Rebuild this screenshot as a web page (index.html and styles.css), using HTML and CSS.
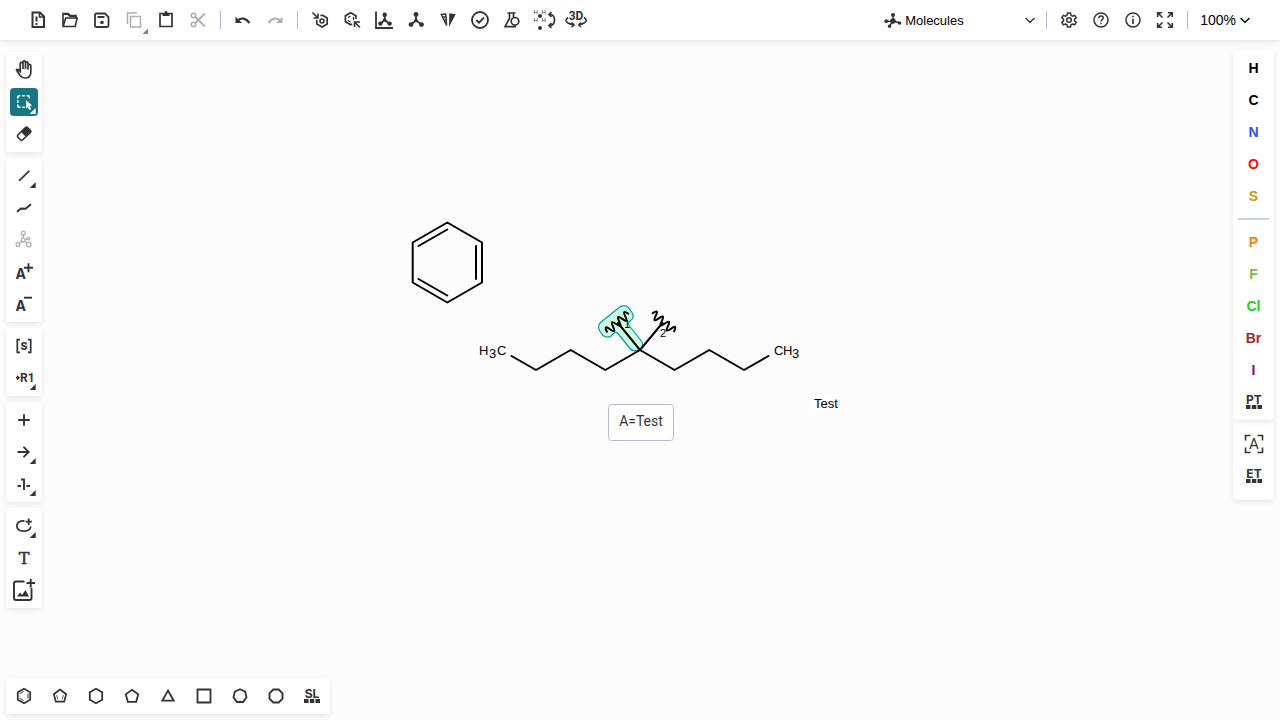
FILE: index.html
```html
<!DOCTYPE html>
<html lang="en">
<head>
<meta charset="utf-8">
<meta name="viewport" content="width=device-width, initial-scale=1">
<title>Molecule editor</title>
<link rel="stylesheet" href="styles.css">
</head>
<body>
<svg class="defs" aria-hidden="true">
  <defs>
    <path id="corner" d="M25.700 20v6h-6z" fill="currentColor" stroke="none"/>
    <path id="dots" d="M6 17h4.500v4H6zM11.800 17h4.500v4h-4.500zM17.500 17H22v4h-4.500z" fill="currentColor" stroke="none"/>
  </defs>
</svg>
<header class="topbar">
  <button class="tool" aria-label="Clear canvas"><svg class="icon" viewBox="0 0 28 28"><path d="M8.500 6.500h7.500l4 4V21H8.500z"/><path d="M15.500 6v5h5" stroke-width="1.500"/><path d="M12.500 10.500v5M12.500 17v2"/></svg></button>
  <button class="tool" aria-label="Open"><svg class="icon" viewBox="0 0 28 28"><path d="M7 20.500v-13h5l2 2h6v2M7.200 20.500l2.500-8.500h11.500l-2 8.500z" stroke-width="1.600"/><path d="M7 8h5l2 2h6" stroke-width="2"/></svg></button>
  <button class="tool" aria-label="Save"><svg class="icon" viewBox="0 0 28 28"><path d="M8.500 7.500H17l3.500 3.500v8.500q0 1.500-1.500 1.500H8.500Q7 21 7 19.500V9q0-1.500 1.500-1.500z" stroke-width="1.800"/><path d="M9.500 11h7"/><circle class="solid" cx="14" cy="16.500" r="1.800"/></svg></button>
  <button class="tool dim" aria-label="Copy"><svg class="icon" viewBox="0 0 28 28"><path d="M7.500 18V7H17M10.500 10.500h10V21h-10z" stroke-width="1.500"/><path class="solid corner-gray" d="M28 22.500V28h-5.500z"/></svg></button>
  <button class="tool" aria-label="Paste"><svg class="icon" viewBox="0 0 28 28"><path d="M8 7.500h12v13H8z" stroke-width="1.700"/><path class="solid" d="M10.500 7h2q0-2 1.500-2t1.500 2h2v3h-7z"/></svg></button>
  <button class="tool dim" aria-label="Cut"><svg class="icon" viewBox="0 0 28 28"><circle cx="9.500" cy="9.500" r="2.200" stroke-width="1.600"/><circle cx="9.500" cy="18.500" r="2.200" stroke-width="1.600"/><path d="M11 10.800l10 9.700M11 17.200L21 7.500"/></svg></button>
  <span class="rule"></span>
  <button class="tool" aria-label="Undo"><svg class="icon" viewBox="0 0 28 28"><path d="M8.500 14.500q6.500-5 12 2.500" stroke-width="2.200"/><path class="solid" d="M6.500 10.500v6.500h6.500z"/></svg></button>
  <button class="tool dim" aria-label="Redo"><svg class="icon" viewBox="0 0 28 28"><path d="M19.500 14.500q-6.500-5-12 2.500" stroke-width="2.200"/><path class="solid" d="M21.500 10.500v6.500H15z"/></svg></button>
  <span class="rule"></span>
  <button class="tool" aria-label="Aromatize"><svg class="icon" viewBox="0 0 28 28"><path d="M16 9l5.200 3v6L16 21l-5.200-3v-4M14.500 9.800L16 9" stroke-width="1.700"/><circle cx="16" cy="15" r="2" stroke-width="1.600"/><path d="M6.500 6.500l5 5M12 7.500V12H7.500" stroke-width="1.600"/></svg></button>
  <button class="tool" aria-label="Dearomatize"><svg class="icon" viewBox="0 0 28 28"><path d="M18 13V9.700l-5.300-3-5.300 3v6l5.300 3 1.500-.8" stroke-width="1.700"/><path d="M10 11.500l2.500-1.500M10 14.500l2.500 1.500M15.500 10.800V14" stroke-width="1.300"/><path d="M22 21.500l-5-5M16.500 21v-5H22" stroke-width="1.700"/></svg></button>
  <button class="tool" aria-label="Layout"><svg class="icon" viewBox="0 0 28 28"><path d="M6 5.500V22h17M14.700 9v5l-4.200 3.500M14.700 14l4.500 3.500" stroke-width="1.800"/><g class="solid"><circle cx="14.700" cy="8.700" r="2.200"/><circle cx="10.400" cy="17.600" r="2.200"/><circle cx="19.600" cy="17.600" r="2.200"/><circle cx="14.700" cy="14" r="1.700"/></g></svg></button>
  <button class="tool" aria-label="Clean up"><svg class="icon" viewBox="0 0 28 28"><path d="M14 8v6.500l-5 4M14 14.500l5.500 4" stroke-width="1.800"/><g class="solid"><circle cx="14" cy="8.500" r="2.400"/><circle cx="9" cy="18.600" r="2.400"/><circle cx="19.500" cy="18.600" r="2.400"/><circle cx="14" cy="14.500" r="1.800"/></g></svg></button>
  <button class="tool" aria-label="Calculate CIP"><svg class="icon" viewBox="0 0 28 28"><path d="M7.300 8.500l4.500-.5.800 11.500z" stroke-width="1.400"/><path d="M8.500 11h4M10 14h2.500" stroke-width="1.300"/><path class="solid" d="M15.300 7.300l6.400 1L15 21z"/></svg></button>
  <button class="tool" aria-label="Check structure"><svg class="icon" viewBox="0 0 28 28"><circle cx="14" cy="14" r="8" stroke-width="1.800"/><path d="M10.300 14l2.700 2.600 5-5"/></svg></button>
  <button class="tool" aria-label="Calculated values"><svg class="icon" viewBox="0 0 28 28"><path d="M9.500 7h8M11.500 7v5.500L7 20.700h11M15.500 7v4" stroke-width="1.700"/><circle cx="17" cy="15.300" r="3.800" stroke-width="1.700"/></svg></button>
  <button class="tool" aria-label="Add or remove explicit hydrogens"><svg class="icon" viewBox="0 0 28 28"><g class="tiny"><text x="3.500" y="8">H</text><text x="11.500" y="8">H</text><text x="3.500" y="16">H</text><text x="11.500" y="16">H</text></g><circle class="solid" cx="10" cy="10" r="2"/><circle class="solid" cx="10" cy="22" r="2"/><path d="M19.500 8.500h1.500q3.500 1 3.500 5.500t-3.500 5.500h-1.500M21.500 6l-2.500 2.500L21.500 11M21.500 17L19 19.500l2.500 2.500" stroke-width="1.700"/></svg></button>
  <button class="tool" aria-label="3D viewer"><svg class="icon" viewBox="0 0 28 28"><text class="t3d" x="14" y="14">3D</text><path d="M6 11.500q-4 3 0 5.500 2.500 1.500 5.500 1.800M22 11.500q4.500 3 0 5.500-2 1.300-5 1.700M9.500 16.500l2.500 2.500-2.500 2.200M19 16.500L16.700 19l2.300 2" stroke-width="1.600"/></svg></button>

  <div class="mode">
    <svg class="mode-logo" viewBox="0 0 18 18" aria-hidden="true"><path d="M9 4v6M2 10.500L9 10l7 2M9 10l-3.500 5" stroke-width="1.400"/><g class="solid"><circle cx="9" cy="4" r="2"/><circle cx="2.200" cy="10.200" r="1.900"/><circle cx="9" cy="10" r="2.700"/><circle cx="15.500" cy="12" r="1.800"/><circle cx="5.500" cy="15.300" r="1.700"/></g></svg>
    <select class="mode-select" aria-label="Editor mode"><option>Molecules</option><option>Macromolecules</option></select>
    <svg class="chevron" viewBox="0 0 12 12" aria-hidden="true"><path d="M1.500 4L6 8.300 10.500 4"/></svg>
  </div>
  <span class="rule"></span>
  <button class="tool" aria-label="Settings"><svg class="icon" viewBox="0 0 28 28"><path d="M12.500 7h3l.5 2.300 1.500.8 2.200-.8 1.500 2.500-1.700 1.500v1.500l1.700 1.500-1.500 2.500-2.200-.8-1.500.8-.5 2.200h-3l-.5-2.200-1.500-.8-2.200.8-1.500-2.500L8.500 14.800v-1.500l-1.700-1.500 1.500-2.500 2.200.8 1.500-.8z" stroke-width="1.500"/><circle cx="14" cy="14" r="2.300" stroke-width="1.500"/></svg></button>
  <button class="tool" aria-label="Help"><svg class="icon" viewBox="0 0 28 28"><circle cx="14" cy="14" r="7" stroke-width="1.500"/><path d="M11.800 12.300q0-2.200 2.200-2.200t2.200 2q0 1-1.200 1.700-1 .7-1 1.700M14 16.700v1.600" stroke-width="1.500"/></svg></button>
  <button class="tool" aria-label="About"><svg class="icon" viewBox="0 0 28 28"><circle cx="14" cy="14" r="7" stroke-width="1.500"/><path d="M14 9.700v1.600M14 12.700v5.300" stroke-width="1.600"/></svg></button>
  <button class="tool" aria-label="Full screen"><svg class="icon" viewBox="0 0 28 28"><path d="M6.700 11V6.700H11M17 6.700h4.300V11M21.300 17v4.300H17M11 21.300H6.700V17M7 7l4.500 4.500M21 7l-4.500 4.500M21 21l-4.500-4.500M7 21l4.500-4.500" stroke-width="1.600"/></svg></button>
  <span class="rule"></span>
  <button class="zoom" aria-haspopup="menu">100%<svg class="chevron" viewBox="0 0 12 12" aria-hidden="true"><path d="M1.500 4L6 8.300 10.500 4"/></svg></button>
</header>

<main class="workspace">
  <aside class="side side-left" aria-label="Drawing tools">
    <div class="group">
      <button class="tool" aria-label="Hand"><svg class="icon" viewBox="0 0 28 28"><path d="M10.200 15.500L8 13.500q-1.200-.7-1.500.5l3.500 5.500q2 2.500 5 2.500 5.500 0 5.800-5.500V9.500q-.2-1.200-1.400-1.200T18 9.500v4V7q-.2-1.200-1.300-1.200T15.500 7v6V6q-.2-1.200-1.300-1.200T13 6v7V7.500q-.2-1.200-1.400-1.200t-1.400 1.200z" stroke-width="1.700"/></svg></button>
      <button class="tool active" aria-label="Rectangle selection" aria-pressed="true"><svg class="icon" viewBox="0 0 28 28"><path d="M7.800 10.500V9q0-1.200 1.200-1.200h1.500M16.500 7.800H18q1.200 0 1.200 1.200v1.500M7.800 16.500V18q0 1.200 1.200 1.200h1.500M12.300 7.800h2.500M7.800 12.300v2.500M12.300 19.200h2.500" stroke-width="1.600"/><path class="solid" d="M16 12.200l6.200 5.300-2.700.5 1.700 3-1.800 1-1.700-3-1.700 1.700z"/><use href="#corner"/></svg></button>
      <button class="tool" aria-label="Erase"><svg class="icon" viewBox="0 0 28 28"><path d="M15.500 7.500q1-.8 2 0l3 3q.8 1 0 2l-8 7.500q-1 .8-2 0l-2.700-3q-.8-1 0-2z" stroke-width="1.600"/><path class="solid" d="M16.500 7l4.500 4.500-5.500 5-4.500-4.500z"/></svg></button>
    </div>
    <div class="group">
      <button class="tool" aria-label="Single bond"><svg class="icon" viewBox="0 0 28 28"><path d="M9 18.800L19.300 8.800" stroke-width="1.700"/><use href="#corner"/></svg></button>
      <button class="tool" aria-label="Chain"><svg class="icon" viewBox="0 0 28 28"><path d="M7 17.800l4-3.300 4.500.2L21 10.300" stroke-width="2"/></svg></button>
      <button class="tool dim" aria-label="Stereochemistry"><svg class="icon" viewBox="0 0 28 28"><g stroke-width="1.300"><circle cx="13.300" cy="7" r="1.900"/><circle cx="13.300" cy="14" r="1.900"/><circle cx="8" cy="18.500" r="1.900"/><circle cx="18.800" cy="18.500" r="2.300"/><circle cx="18.600" cy="12.500" r="1.200"/><path d="M13.300 9v3M11.800 15.200l-2.300 2M15 15.200l2.200 1.800M15.300 13.500l2.200-.6"/></g></svg></button>
      <button class="tool" aria-label="Charge plus"><svg class="icon" viewBox="0 0 28 28"><text class="letter-a" x="5.500" y="21">A</text><path d="M18.500 5.300v9M14 9.800h9" stroke-width="1.900"/></svg></button>
      <button class="tool" aria-label="Charge minus"><svg class="icon" viewBox="0 0 28 28"><text class="letter-a" x="5.500" y="21">A</text><path d="M14 7.700h8" stroke-width="1.900"/></svg></button>
    </div>
    <div class="group">
      <button class="tool" aria-label="S-Group"><svg class="icon" viewBox="0 0 28 28"><path d="M10 7.700H7.300v12.600H10M18 7.700h2.700v12.600H18" stroke-width="1.700"/><text class="letter-s" x="14" y="18">s</text></svg></button>
      <button class="tool" aria-label="R-Group label"><svg class="icon" viewBox="0 0 28 28"><path d="M6 13.700h3M7 11.700l2 2-2 2" stroke-width="1.400"/><text class="letter-r" x="10" y="18">R1</text><use href="#corner"/></svg></button>
    </div>
    <div class="group">
      <button class="tool" aria-label="Reaction plus"><svg class="icon" viewBox="0 0 28 28"><path d="M14 8.200v11.600M8.200 14h11.600" stroke-width="1.900"/></svg></button>
      <button class="tool" aria-label="Reaction arrow"><svg class="icon" viewBox="0 0 28 28"><path d="M7.500 14H19M13.500 8.800l5.200 5.200-5.200 5.200" stroke-width="1.900"/><use href="#corner"/></svg></button>
      <button class="tool" aria-label="Reaction mapping"><svg class="icon" viewBox="0 0 28 28"><path d="M7.500 16H11M16.500 16H20M11 9.500h3V20" stroke-width="1.900"/><use href="#corner"/></svg></button>
    </div>
    <div class="group">
      <button class="tool" aria-label="Ellipse"><svg class="icon" viewBox="0 0 28 28"><path d="M14.500 8.800Q7 8.500 6.800 14q.5 5 7 5.200 6.400-.2 7-4.700" stroke-width="1.800"/><path d="M18.700 6.500v6.400M15.500 9.700h6.400" stroke-width="1.800"/><use href="#corner"/></svg></button>
      <button class="tool" aria-label="Add text"><svg class="icon" viewBox="0 0 28 28"><text class="letter-t" x="14" y="20">T</text></svg></button>
      <button class="tool" aria-label="Add image"><svg class="icon" viewBox="0 0 28 28"><path d="M14.500 5.500H6Q4 5.500 4 7.500V22q0 2 2 2h13.500q2 0 2-2V12M20.700 3v8.500M16.500 7h8.500" stroke-width="1.900"/><path class="solid" d="M7 20.500l3-4 2 2.500 3.500-5L19 20.500z"/></svg></button>
    </div>
  </aside>

  <section class="canvas" aria-label="Canvas">
    <svg class="drawing" viewBox="400 200 480 318">
      <path class="bond" d="M447.300 222.500L482 242.500v40l-34.700 20-34.600-20v-40zM418.500 246l28.800-16.500M476 246v33M447.300 295.500L418.500 279"/>
      <path class="highlight" d="M600.500 322.500L619.500 307.200Q623.500 304 628 307L632 312.500Q635 318 630.500 320.500L628.500 322.500Q628.300 324 629.500 326L641 340.500Q644 344.500 641.500 348L636.500 350.700Q632.500 351.500 630 348.500L617.500 333Q615.500 331.500 613.500 333.500L611 336Q607 338.500 603 335.500L599.800 331Q597 326.500 600.500 322.500z"/>
      <path class="bond" d="M511.500 356l24.500 14 34.700-20 34.600 20 34.700-20 34.600 20 34.700-20 34.700 20 24.500-14M640 350l-22-27M640 350l22.500-27"/>
      <path class="bond" transform="translate(617 322) rotate(-40)" d="M-14 1q2-8 4 0t4 0 4 0 4 0 4 0 4 0 4 0"/>
      <path class="bond" transform="translate(664 321.500) rotate(40)" d="M-14 1q2-8 4 0t4 0 4 0 4 0 4 0 4 0 4 0"/>
      <text class="mark" x="624" y="328">1</text>
      <text class="mark two" x="660" y="337">2</text>
      <g class="atom">
        <text x="479" y="355">H</text><text x="489" y="358">3</text><text x="497" y="355">C</text>
        <text x="774" y="355">C</text><text x="783" y="355">H</text><text x="792" y="358">3</text>
        <rect x="812" y="395" width="27" height="17" fill="#fff"/>
        <text x="814" y="408">Test</text>
      </g>
      <rect class="data-box" x="608.500" y="404.500" width="65" height="36" rx="3"/>
      <text class="data-text" x="641" y="426">A=Test</text>
    </svg>
  </section>

  <aside class="side side-right" aria-label="Atoms">
    <div class="group atoms">
      <button class="tool el h">H</button>
      <button class="tool el c">C</button>
      <button class="tool el n">N</button>
      <button class="tool el o">O</button>
      <button class="tool el s">S</button>
      <span class="bar"></span>
      <button class="tool el p">P</button>
      <button class="tool el f">F</button>
      <button class="tool el cl">Cl</button>
      <button class="tool el br">Br</button>
      <button class="tool el i">I</button>
      <button class="tool" aria-label="Periodic table"><svg class="icon" viewBox="0 0 28 28"><text class="abbr" x="14" y="15.500">PT</text><use href="#dots"/></svg></button>
    </div>
    <div class="group extra">
      <button class="tool" aria-label="Any atom"><svg class="icon" viewBox="0 0 28 28"><path d="M5.500 10.500v-5h5M17.500 5.500h5v5M22.500 17.500v5h-5M10.500 22.500h-5v-5" stroke-width="1.600"/><text class="any" x="14" y="19">A</text></svg></button>
      <button class="tool" aria-label="Extended table"><svg class="icon" viewBox="0 0 28 28"><text class="abbr" x="14" y="15.500">ET</text><use href="#dots"/></svg></button>
    </div>
  </aside>
</main>

<footer class="bottom">
  <div class="group templates">
    <button class="tool" aria-label="Benzene"><svg class="icon" viewBox="0 0 28 28"><path d="M14 6.700l6.200 3.500v7.600L14 21.300l-6.200-3.500v-7.600z" stroke-width="1.700"/><path d="M10 11.500l3.500-2M10 16.500l3.500 2M18 11.500v5" stroke-width="1"/></svg></button>
    <button class="tool" aria-label="Cyclopentadiene"><svg class="icon" viewBox="0 0 28 28"><path d="M14 7.500l6.200 4.700-2 7.400H9.800l-2-7.400z" stroke-width="1.700"/><path d="M10.700 13l1 4.500M17.300 13l-1 4.500" stroke-width=".8"/></svg></button>
    <button class="tool" aria-label="Cyclohexane"><svg class="icon" viewBox="0 0 28 28"><path d="M14 6.700l6.200 3.500v7.600L14 21.300l-6.200-3.500v-7.600z" stroke-width="1.800"/></svg></button>
    <button class="tool" aria-label="Cyclopentane"><svg class="icon" viewBox="0 0 28 28"><path d="M14 7.800l6.200 4.600-2 7.400H9.800l-2-7.400z" stroke-width="1.800"/></svg></button>
    <button class="tool" aria-label="Cyclopropane"><svg class="icon" viewBox="0 0 28 28"><path d="M14 8.500l5.700 10.200H8.300z" stroke-width="1.800"/></svg></button>
    <button class="tool" aria-label="Cyclobutane"><svg class="icon" viewBox="0 0 28 28"><path d="M7.500 7.500h13v13h-13z" stroke-width="1.800"/></svg></button>
    <button class="tool" aria-label="Cycloheptane"><svg class="icon" viewBox="0 0 28 28"><path d="M14 7.200l5.200 2.500 1.300 5.600-3.500 4.700h-6l-3.500-4.700 1.300-5.600z" stroke-width="1.800"/></svg></button>
    <button class="tool" aria-label="Cyclooctane"><svg class="icon" viewBox="0 0 28 28"><path d="M11.300 7.500h5.400l3.800 3.800v5.400l-3.800 3.800h-5.400l-3.800-3.800v-5.400z" stroke-width="1.900"/></svg></button>
    <button class="tool" aria-label="Structure library"><svg class="icon" viewBox="0 0 28 28"><text class="abbr" x="14" y="15.500">SL</text><use href="#dots"/></svg></button>
  </div>
</footer>
</body>
</html>
```
FILE: styles.css
```css
* { box-sizing: border-box; }

body {
  margin: 0;
  min-height: 100vh;
  display: flex;
  flex-direction: column;
  background: #fcfcfc;
  color: #333;
  font-family: "Liberation Sans", Arial, sans-serif;
  font-size: 14px;
}

button, select { font: inherit; color: inherit; }

.defs { display: none; }

.topbar {
  display: flex;
  align-items: center;
  gap: 4px;
  height: 40px;
  padding: 0 25px 0 24px;
  background: #fff;
  box-shadow: 0 2px 5px rgba(103, 104, 132, 0.15);
}

.tool {
  flex: none;
  display: flex;
  align-items: center;
  justify-content: center;
  width: 28px;
  height: 28px;
  padding: 0;
  border: 0;
  border-radius: 4px;
  background: transparent;
  color: #333;
}
.tool.dim { color: #b0b0b0; }
.tool.active { background: #167782; color: #fff; }

.icon, .mode-logo, .chevron {
  display: block;
  flex: none;
  fill: none;
  stroke: currentColor;
  stroke-width: 2;
}
.icon { width: 28px; height: 28px; }
.chevron { width: 12px; height: 12px; stroke-width: 1.3; }
.solid { fill: currentColor; stroke: none; }
.corner-gray { fill: #808080; }

.icon text { fill: currentColor; stroke: none; font-weight: 700; }
.icon .tiny text { font-size: 6px; font-weight: 400; }
.icon .t3d { font: 700 12px Roboto, sans-serif; text-anchor: middle; }
.icon .letter-a { font: 700 14px Inter, sans-serif; }
.icon .letter-s { font: 700 14px Roboto, sans-serif; text-anchor: middle; }
.icon .letter-r { font: 700 12px Roboto, sans-serif; }
.icon .letter-t { font: 700 16px "DejaVu Serif", serif; text-anchor: middle; }
.icon .abbr { font: 700 12px Inter, sans-serif; text-anchor: middle; }
.icon .any { font: 400 15px Roboto, sans-serif; text-anchor: middle; }
.icon .letter-t { font-weight: 400; stroke: currentColor; stroke-width: 0.5; }

.rule {
  flex: none;
  width: 1px;
  height: 18px;
  margin: 0 4px;
  background: #b4b9d6;
}

.mode {
  display: grid;
  grid-template-columns: 21px 1fr 14px;
  align-items: center;
  width: 154px;
  height: 28px;
  margin-left: auto;
}
.mode-logo { width: 18px; height: 18px; grid-area: 1 / 1; }
.mode-select {
  grid-area: 1 / 1 / 2 / 4;
  height: 28px;
  padding: 0 0 0 21px;
  border: 0;
  background: transparent;
  appearance: none;
  color: #000;
  font-size: 13px;
}
.mode .chevron { grid-area: 1 / 3; color: #333; }

.zoom {
  display: flex;
  align-items: center;
  gap: 3px;
  height: 28px;
  padding: 0 4px;
  border: 0;
  background: transparent;
  color: #000;
}

.workspace { flex: 1; display: flex; }

.side {
  flex: none;
  display: flex;
  flex-direction: column;
  width: 47px;
}
.side-left { gap: 6px; padding: 12px 5px 0 6px; }
.side-right { padding: 10px 6px 0 0; }

.group {
  display: flex;
  flex-direction: column;
  align-items: center;
  gap: 4px;
  padding: 4px;
  border-radius: 4px;
  background: #fff;
  box-shadow: 0 2px 5px rgba(103, 104, 132, 0.15);
}
.atoms { position: relative; z-index: 1; padding: 4px 6px; }
.extra { padding: 10px 6px 10px 7px; border-radius: 0 0 4px 4px; }

.bar { width: 31px; height: 2px; margin: 4px 0; background: #cad3dd; }

.el { font-weight: 700; }
.h, .c { color: #000; }
.n { color: #3050f8; }
.o { color: #ff0d0d; }
.s { color: #c99a19; }
.p { color: #ff8000; }
.f { color: #78bc42; }
.cl { color: #1fd01f; }
.br { color: #a62929; }
.i { color: #940094; }

.canvas {
  flex: 1;
  display: flex;
  align-items: center;
  justify-content: center;
}
.drawing { width: 480px; height: 318px; }
.bond { fill: none; stroke: #000; stroke-width: 2; stroke-linecap: round; stroke-linejoin: round; }
.highlight { fill: #ccffdd; stroke: #0097a8; stroke-width: 1.2; }
.mark { font: 400 10px "DejaVu Sans", sans-serif; }
.mark.two { font: 400 11px "Liberation Sans", sans-serif; }
.atom { font-size: 13px; fill: #000; }
.data-box { fill: #fff; stroke: #b4b9d6; }
.data-text { font: 400 14px Roboto, sans-serif; fill: #333; text-anchor: middle; }

.bottom { display: flex; padding: 0 6px 6px; }
.templates { flex-direction: row; gap: 8px; }
```
